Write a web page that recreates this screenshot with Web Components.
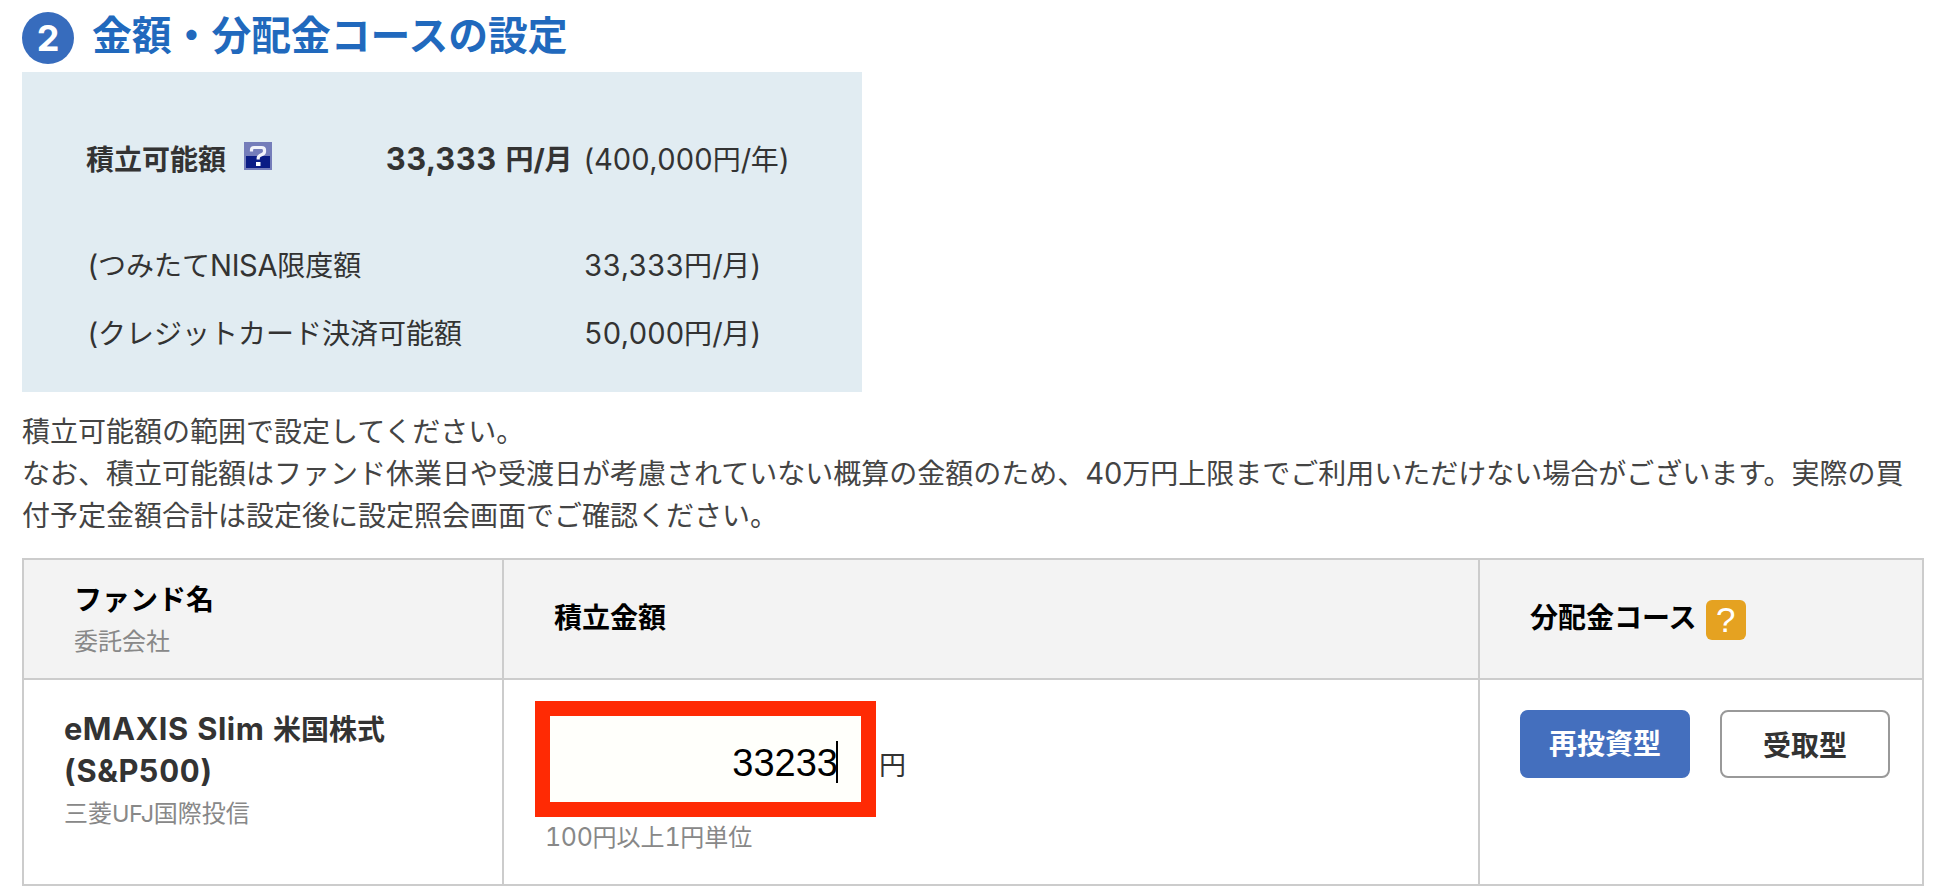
<!DOCTYPE html>
<html lang="ja">
<head>
<meta charset="UTF-8">
<title>金額・分配金コースの設定</title>
<style>
  body {
    margin: 0;
    padding: 0 20px 0 22px;
    background: #fff;
    color: #333;
    font-family: "Noto Sans CJK JP", sans-serif;
    font-size: 28px;
    line-height: 42px;
  }
</style>
</head>
<body>
<step-heading step="2">金額・分配金コースの設定</step-heading>

<limit-panel>
  <limit-row main>
    <span slot="label">積立可能額</span>
    <help-icon slot="label"></help-icon>
    <b slot="amount"><latin-run wide>33,333 </latin-run>円<latin-run>/</latin-run>月</b>
    <span slot="value"><latin-run>(400,000</latin-run>円<latin-run>/</latin-run>年<latin-run>)</latin-run></span>
  </limit-row>
  <limit-row>
    <span slot="label"><latin-run>(</latin-run>つみたて<latin-run>NISA</latin-run>限度額</span>
    <span slot="value"><latin-run>33,333</latin-run>円<latin-run>/</latin-run>月<latin-run>)</latin-run></span>
  </limit-row>
  <limit-row>
    <span slot="label"><latin-run>(</latin-run>クレジットカード決済可能額</span>
    <span slot="value"><latin-run>50,000</latin-run>円<latin-run>/</latin-run>月<latin-run>)</latin-run></span>
  </limit-row>
</limit-panel>

<note-text>積立可能額の範囲で設定してください。<br>なお、積立可能額はファンド休業日や受渡日が考慮されていない概算の金額のため、<latin-run>40</latin-run>万円上限までご利用いただけない場合がございます。実際の買付予定金額合計は設定後に設定照会画面でご確認ください。</note-text>

<fund-table>
  <fund-name slot="head-fund">
    ファンド名
    <span slot="company">委託会社</span>
  </fund-name>
  <span slot="head-amount">積立金額</span>
  <span slot="head-course">分配金コース</span>
  <help-badge slot="head-course">?</help-badge>

  <fund-name slot="fund">
    <latin-run wide>eMAXIS Slim </latin-run>米国株式<br><latin-run wide>(S&amp;P500)</latin-run>
    <span slot="company">三菱<latin-run narrow>UFJ</latin-run>国際投信</span>
  </fund-name>
  <amount-field slot="amount" value="33233">
    <span slot="hint"><latin-run>100</latin-run>円以上<latin-run>1</latin-run>円単位</span>
  </amount-field>
  <course-button slot="course" selected>再投資型</course-button>
  <course-button slot="course">受取型</course-button>
</fund-table>

<script>
// Shadow root を render() の HTML で組み立てる共通クラス
class BaseElement extends HTMLElement {
  constructor() {
    super();
    this.attachShadow({ mode: 'open' });
  }

  connectedCallback() {
    this.shadowRoot.innerHTML = this.render().trim();
  }
}

// 欧文・数字用（前後に余分な空白を出さない）
class LatinRun extends BaseElement {
  render() {
    return `<style>
        :host {
          display: inline;
          font-family: Inter, "Liberation Sans", sans-serif;
          font-size: 1.04em;
          font-variant-numeric: tabular-nums;
          letter-spacing: -.35px;
          line-height: 1;
        }
        :host([wide]) { font-size: 1.1em; letter-spacing: .5px; }
        :host([narrow]) { font-size: .98em; letter-spacing: -.5px; }
      </style><slot></slot>`;
  }
}

class StepHeading extends BaseElement {
  render() {
    return `
      <style>
        :host {
          display: flex;
          height: 72px;
          box-sizing: border-box;
          color: #2169bd;
        }
        .step {
          width: 52px;
          height: 52px;
          margin: 12px 18px 0 0;
          border-radius: 50%;
          background: #376cbd;
          color: #fff;
          font: bold 36px/52px Inter, sans-serif;
          text-align: center;
        }
        h2 {
          margin: 3px 0 0;
          font-size: 39.8px;
          font-weight: bold;
          line-height: 60px;
        }
      </style>
      <span class="step">${this.getAttribute('step')}</span>
      <h2><slot></slot></h2>
    `;
  }
}

class LimitPanel extends BaseElement {
  render() {
    return `
      <style>
        :host {
          display: flex;
          flex-direction: column;
          width: 840px;
          height: 320px;
          box-sizing: border-box;
          padding: 53px 0 0 65px;
          background: #e1ecf2;
        }
      </style>
      <slot></slot>
    `;
  }
}

class LimitRow extends BaseElement {
  render() {
    return `
      <style>
        :host {
          display: grid;
          grid-template-columns: 497px 1fr;
          height: 68px;
          line-height: 67px;
          white-space: nowrap;
        }
        :host([main]) {
          grid-template-columns: 299px 197px 1fr;
          height: 106px;
          line-height: 66px;
        }
        .label { display: flex; }
        :host([main]) .label {
          gap: 18px;
          margin-left: -1px;
          font-weight: bold;
        }
        :host(:not([main])) .amount { display: none; }
      </style>
      <div class="label"><slot name="label"></slot></div>
      <div class="amount"><slot name="amount"></slot></div>
      <div><slot name="value"></slot></div>
    `;
  }
}

class HelpIcon extends BaseElement {
  render() {
    return `
      <style>
        :host { display: block; width: 28px; height: 28px; margin-top: 17px; }
        svg { display: block; }
      </style>
      <svg width="28" height="28" viewBox="0 0 28 28">
        <rect width="28" height="28" fill="#757dba"/>
        <rect x="2" y="14" width="24" height="12" fill="#0b1c85"/>
        <path d="M7.5 9.5V8Q7.5 5.5 10 5.5H17.5Q20.5 5.5 20.5 8V9.5Q20.5 11.5 18 12.5Q14.2 14 14.2 16V17.5" fill="none" stroke="#f3f4fb" stroke-width="3.2"/>
        <rect x="12" y="20" width="4.5" height="4" fill="#fff"/>
      </svg>
    `;
  }
}

class NoteText extends BaseElement {
  render() {
    return `
      <style>
        :host {
          display: block;
          height: 166px;
          box-sizing: border-box;
          padding-top: 17px;
          color: #444;
        }
      </style>
      <slot></slot>
    `;
  }
}

class FundTable extends BaseElement {
  render() {
    return `
      <style>
        :host {
          display: grid;
          grid-template-columns: 478px 974px 442px;
          grid-template-rows: 118px 204px;
          gap: 2px;
          border: 2px solid #ccc;
          background: #ccc;
        }
        .cell { background: #fff; }
        .head {
          display: flex;
          align-items: center;
          box-sizing: border-box;
          padding: 0 0 6px 50px;
          background: #f3f3f3;
          color: #000;
          font-weight: bold;
        }
        .head-fund { padding-bottom: 0; }
        .head-course { gap: 9px; }
        .fund { padding: 27px 0 0 40px; }
        .amount { padding: 21px 0 0 31px; }
        .course {
          display: flex;
          gap: 30px;
          align-items: flex-start;
          padding: 30px 0 0 40px;
        }
      </style>
      <div class="cell head head-fund"><slot name="head-fund"></slot></div>
      <div class="cell head"><slot name="head-amount"></slot></div>
      <div class="cell head head-course"><slot name="head-course"></slot></div>
      <div class="cell fund"><slot name="fund"></slot></div>
      <div class="cell amount"><slot name="amount"></slot></div>
      <div class="cell course"><slot name="course"></slot></div>
    `;
  }
}

class FundName extends BaseElement {
  render() {
    return `
      <style>
        :host { display: block; font-weight: bold; }
        .company {
          color: #888;
          font-size: 24px;
          font-weight: normal;
        }
      </style>
      <div><slot></slot></div>
      <div class="company"><slot name="company"></slot></div>
    `;
  }
}

class HelpBadge extends BaseElement {
  render() {
    return `
      <style>
        :host {
          display: block;
          width: 40px;
          height: 40px;
          margin-top: 8px;
          border-radius: 6px;
          background: #e5a221;
          color: #fff;
          font: 35px/39px "Liberation Sans", sans-serif;
          text-align: center;
        }
      </style>
      <slot></slot>
    `;
  }
}

class AmountField extends BaseElement {
  render() {
    return `
      <style>
        :host { display: block; }
        .row { display: flex; align-items: center; }
        .box {
          display: flex;
          align-items: center;
          justify-content: flex-end;
          width: 341px;
          height: 116px;
          box-sizing: border-box;
          padding: 7px 23px 0 0;
          border: 15px solid #ff2a04;
          background: #fffffb;
          color: #000;
          font: 38px/42px "Liberation Sans", sans-serif;
        }
        .caret { width: 2px; height: 42px; margin: -2px 0 0 -2px; background: #000; }
        .unit { margin-left: 3px; padding-top: 10px; font-size: 27px; }
        .hint { padding-left: 10px; color: #888; font-size: 24px; line-height: 38px; }
      </style>
      <div class="row">
        <div class="box">${this.getAttribute('value')}<i class="caret"></i></div>
        <span class="unit">円</span>
      </div>
      <div class="hint"><slot name="hint"></slot></div>
    `;
  }
}

class CourseButton extends BaseElement {
  render() {
    return `
      <style>
        :host {
          display: block;
          width: 170px;
          height: 68px;
          box-sizing: border-box;
          border: 2px solid #999;
          border-radius: 8px;
          background: #fff;
          font-weight: bold;
          line-height: 65px;
          text-align: center;
        }
        :host([selected]) {
          border-color: #446fbe;
          background: #446fbe;
          color: #fff;
          line-height: 61px;
        }
      </style>
      <slot></slot>
    `;
  }
}

customElements.define('latin-run', LatinRun);
customElements.define('step-heading', StepHeading);
customElements.define('limit-panel', LimitPanel);
customElements.define('limit-row', LimitRow);
customElements.define('help-icon', HelpIcon);
customElements.define('note-text', NoteText);
customElements.define('fund-table', FundTable);
customElements.define('fund-name', FundName);
customElements.define('help-badge', HelpBadge);
customElements.define('amount-field', AmountField);
customElements.define('course-button', CourseButton);
</script>
</body>
</html>
